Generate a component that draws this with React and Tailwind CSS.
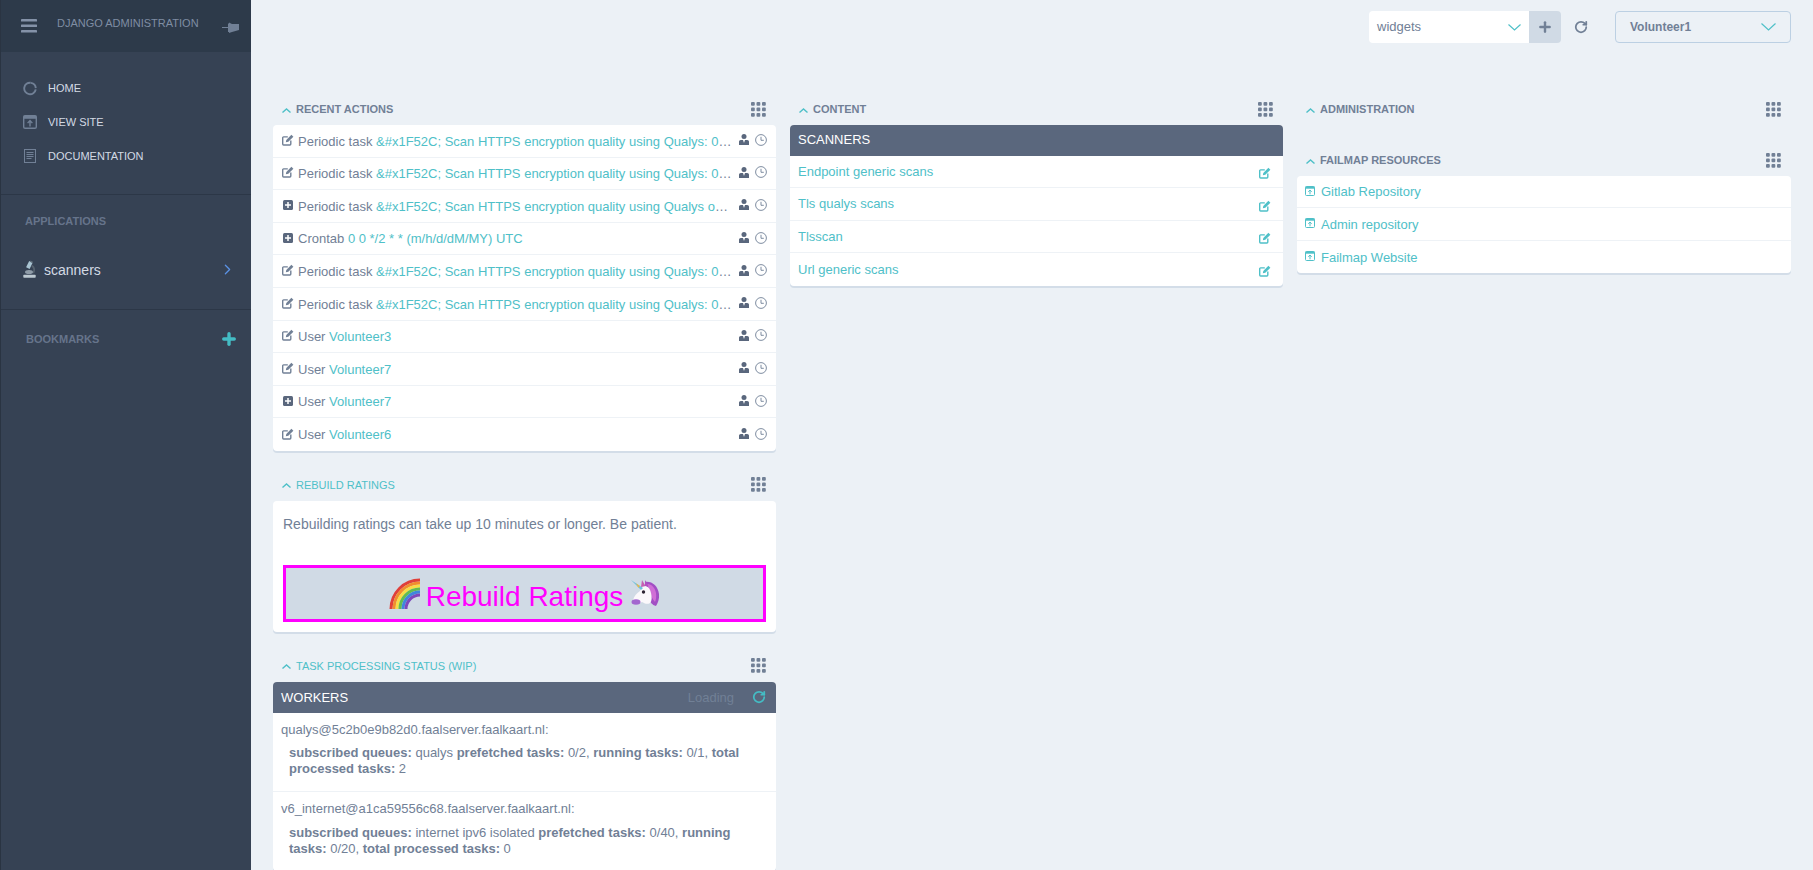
import React from "react";
import { ChevronRight, Plus, RotateCw } from "lucide-react";

const font = "font-['Liberation_Sans',Arial,sans-serif]";

const Grid = () => (
  <svg width="15" height="15" viewBox="0 0 15 15" className="fill-[#718096]">
    {[0, 5.5, 11].flatMap((y) => [0, 5.5, 11].map((x) => <rect key={x + "-" + y} x={x} y={y} width="3.8" height="3.8" rx="1" />))}
  </svg>
);

const Chev = ({ w, h, sw = 1.2, up, c = "#4fc0c8" }) => (
  <svg width={w} height={h} viewBox={`0 0 ${w} ${h}`} fill="none" stroke={c} strokeWidth={sw} className="shrink-0">
    <path d={up ? `M0.5 ${h - 0.5}L${w / 2} 1L${w - 0.5} ${h - 0.5}` : `M0.5 0.5L${w / 2} ${h - 1}L${w - 0.5} 0.5`} />
  </svg>
);

const Edit = ({ c = "#718096", s = 12 }) => (
  <svg width={s} height={s} viewBox="0 0 12 12" fill="none" className="shrink-0">
    <path d="M8.8 6.5v3.6a.9.9 0 0 1-.9.9H1.6a.9.9 0 0 1-.9-.9V3.8a.9.9 0 0 1 .9-.9h4.2" stroke={c} strokeWidth="1.4" />
    <path d="M3.8 8.3l.5-2.4L9.4.7l2 2-5.1 5.1z" fill={c} />
  </svg>
);

const AddBox = () => (
  <svg width="10" height="10" viewBox="0 0 10 10" className="shrink-0">
    <rect width="10" height="10" rx="1.5" fill="#5a677d" />
    <path d="M5 2v6M2 5h6" stroke="#fff" strokeWidth="1.5" />
  </svg>
);

const Person = () => (
  <svg width="10" height="11" viewBox="0 0 10 11" fill="#5a677d" className="shrink-0">
    <circle cx="5" cy="2.6" r="2.5" />
    <path d="M0 11V7.8C0 6.7.8 6 1.8 6H4l1 3 1-3h2.2C9.2 6 10 6.7 10 7.8V11z" />
  </svg>
);

const Clock = () => (
  <svg width="12" height="12" viewBox="0 0 12 12" fill="none" stroke="#718096" className="shrink-0">
    <circle cx="6" cy="6" r="5.4" strokeWidth="0.9" />
    <path d="M6 2.8V6.3H8.8" strokeWidth="0.9" />
  </svg>
);

const Launch = ({ c = "#4fc0c8", s = 10 }) => (
  <svg width={s} height={s} viewBox="0 0 10 10" fill="none" className="shrink-0">
    <rect x="0.5" y="0.5" width="9" height="9" rx="1" stroke={c} />
    <rect x="0.5" y="0.5" width="9" height="2.2" fill={c} />
    <path d="M5 8.3V4.3M3.3 5.8 5 4l1.7 1.8" stroke={c} />
  </svg>
);

const Title = ({ children, accent }) => (
  <div className="h-8 flex items-center justify-between pr-[10px] pl-[9px]">
    <div className="flex items-center gap-[5px]">
      <span className="mt-[2px] flex"><Chev w={9} h={5} sw={1.4} up /></span>
      <span className={`text-[11px] ${accent ? "text-[#4fc0c8]" : "text-[#718096] font-bold"}`}>{children}</span>
    </div>
    <Grid />
  </div>
);

const Card = ({ children }) => (
  <div className="bg-white rounded-[4px] shadow-[0_2px_0_#d3dde8] overflow-hidden">{children}</div>
);

const Action = ({ icon, type, link, last }) => (
  <div className={`h-[32.6px] flex items-center pl-[9px] pr-[9px] gap-[4px] text-[13px] ${last ? "" : "border-b border-[#eef2f6]"}`}>
    <span className="w-[12px] flex justify-center -mt-[2px]">{icon === "edit" ? <Edit /> : <AddBox />}</span>
    <div className="flex-1 min-w-0 truncate text-[#718096] pt-[1px]">
      {type} <span className="text-[#4fc0c8]">{link}</span>
    </div>
    <span className="flex items-center gap-[6px] -mt-[2px]"><Person /><Clock /></span>
  </div>
);

const LinkRow = ({ children, last, icon }) => (
  <div className={`h-[32.4px] flex items-center justify-between px-2 text-[13px] text-[#4fc0c8] ${last ? "" : "border-b border-[#eef2f6]"}`}>
    {children}
    {icon}
  </div>
);

const Rainbow = () => (
  <svg width="31" height="31" viewBox="0 0 31 31" fill="none">
    {[["#e0403a", 29], ["#f28d2e", 26], ["#f8dc45", 23], ["#63bd4f", 20], ["#3f86dc", 17], ["#7d48bb", 14]].map(([c, r]) => (
      <path key={c} d={`M${31 - r} 31A${r} ${r} 0 0 1 31 ${31 - r}`} stroke={c} strokeWidth="3" />
    ))}
  </svg>
);

const Unicorn = () => (
  <svg width="29" height="28" viewBox="9 8 29 28">
    <path d="M23 11c7-1 13 4 14 12 .5 5-1 9-3 12-4-1-6-4-7-8-1-5-3-10-4-16z" fill="#a24fc4" />
    <path d="M25 13c5 0 8 4 9 9 .5 4 0 7-1 9-3-3-4-7-5-11z" fill="#d06fd6" />
    <path d="M20 16c5-2 8 1 9 6 1 4 1 8-1 10-3 2-6 0-8-1l-5 2c-3 1-5-2-4-4 1-4 4-7 7-9z" fill="#fbf8fb" />
    <path d="M9 9l12 8-2 2z" fill="#6ec1dc" />
    <path d="M14 12.3l4 2.7-1.7 1.7z" fill="#e9b84a" />
    <path d="M19 16l1-7 3.500 6z" fill="#c65fb4" />
    <path d="M23 15l0-6 3.500 6z" fill="#b34fc0" />
    <circle cx="21.500" cy="21" r="1.700" fill="#2d2433" />
    <ellipse cx="14" cy="31" rx="4.500" ry="2.800" fill="#a366cf" />
  </svg>
);

const Microscope = () => (
  <svg width="13" height="18" viewBox="0 0 13 18" className="shrink-0">
    <path d="M6.200 1l3.400 1.800-3 6.200-3.500-1.800z" fill="#a9c4d2" />
    <path d="M7.500 0.500l2.500 1.200-.7 1.300-2.500-1.200z" fill="#5d6b78" />
    <path d="M9.300 5c3 1.600 3.700 5.800 1.600 8.600L9.500 12.500c1.400-2 1-4.600-1.100-5.900z" fill="#56626f" />
    <ellipse cx="6" cy="12" rx="4" ry="2" fill="#8f9ca8" />
    <rect x="0.300" y="14.800" width="12.400" height="3" rx="0.700" fill="#bcc8d0" />
  </svg>
);

const SideRow = ({ icon, children }) => (
  <div className="h-[34px] flex items-center pl-[22px] gap-[11px] text-[11px] text-[#d3dae4]">
    <span className="w-[14px] flex justify-center">{icon}</span>
    {children}
  </div>
);

const Sidebar = () => (
  <aside className="w-[251px] shrink-0 bg-[#364254] border-l border-[#2a3442]">
    <div className="h-[52px] bg-[#2d3a4a] flex pl-[20px] relative">
      <svg width="16" height="14" viewBox="0 0 16 14" fill="#8492a8" className="mt-[19px]">
        <rect width="16" height="2.600" y="0" rx="0.400" />
        <rect width="16" height="2.600" y="5.500" rx="0.400" />
        <rect width="16" height="2.600" y="11" rx="0.400" />
      </svg>
      <span className="ml-[20px] mt-[16px] text-[11px] text-[#7f8da3] leading-[14px]">DJANGO ADMINISTRATION</span>
      <svg width="17" height="13" viewBox="0 0 17 13" className="absolute left-[221px] top-[21px]" fill="#718096">
        <path d="M0 6h6V2.500h1V1.500L10 3h7v6l-7 2-3 1v-1H6V7H0z" />
      </svg>
    </div>
    <div className="pt-[19px] pb-[21px] border-b border-[#2c3747]">
      <SideRow icon={<svg width="15" height="15" viewBox="0 0 15 15" fill="none" stroke="#718096" strokeWidth="2"><circle cx="7.500" cy="7.500" r="6.200" strokeDasharray="8 1.300 28.300 1.300" transform="rotate(-80 7.500 7.500)" /></svg>}>HOME</SideRow>
      <SideRow icon={<Launch c="#718096" s={14} />}>VIEW SITE</SideRow>
      <SideRow icon={<svg width="12" height="14" viewBox="0 0 12 14" fill="none" stroke="#718096"><rect x="0.500" y="0.500" width="11" height="13" /><path d="M2.500 3.500h7M2.500 5.500h7M2.500 7.500h7M2.500 9.500h5" /></svg>}>DOCUMENTATION</SideRow>
    </div>
    <div className="pl-[24px] pt-[20px] text-[11px] font-bold text-[#66748b] leading-[13px]">APPLICATIONS</div>
    <div className="mt-[30px] pb-[29px] border-b border-[#2c3747] flex items-center pl-[22px] pr-[15px]">
      <Microscope />
      <span className="ml-[8px] pt-[2px] text-[14px] leading-[20px] text-[#d3dae4] flex-1">scanners</span>
      <ChevronRight size={17} strokeWidth={1.800} className="text-[#5b92e5]" />
    </div>
    <div className="pl-[25px] pr-[13px] pt-[20px] flex items-center justify-between">
      <span className="text-[11px] font-bold text-[#66748b]">BOOKMARKS</span>
      <Plus size={18} strokeWidth={4.500} className="text-[#44bcc4]" />
    </div>
  </aside>
);

const TopBar = () => (
  <div className="h-[93px] pt-[11px] pr-[22px] flex justify-end items-start">
    <div className="flex w-[192px] h-[32px]">
      <div className="flex-1 bg-white rounded-l-[4px] flex items-center justify-between pl-2 pr-[8px] text-[13px] text-[#718096]">
        widgets
        <Chev w={13} h={7} />
      </div>
      <div className="w-[32px] bg-[#d0dae5] rounded-r-[4px] flex items-center justify-center">
        <Plus size={16} strokeWidth={3.600} className="text-[#718096]" />
      </div>
    </div>
    <div className="w-[54px] h-[32px] flex items-center justify-center pr-[14px]">
      <RotateCw size={14} strokeWidth={3} className="text-[#718096]" />
    </div>
    <div className="w-[176px] h-[32px] rounded-[4px] border border-[#bcd0e3] flex items-center justify-between pl-[14px] pr-[14px] text-[12px] font-bold text-[#718096]">
      Volunteer1
      <Chev w={15} h={8} />
    </div>
  </div>
);

const scan = "&#x1F52C; Scan HTTPS encryption quality using Qualys: 0 0 */2 * * (m/h/d/dM/MY) UTC and more text here";
const actions = [
  ["edit", "Periodic task", scan],
  ["edit", "Periodic task", scan],
  ["add", "Periodic task", "&#x1F52C; Scan HTTPS encryption quality using Qualys once a day more text"],
  ["add", "Crontab", "0 0 */2 * * (m/h/d/dM/MY) UTC"],
  ["edit", "Periodic task", scan],
  ["edit", "Periodic task", scan],
  ["edit", "User", "Volunteer3"],
  ["edit", "User", "Volunteer7"],
  ["add", "User", "Volunteer7"],
  ["edit", "User", "Volunteer6"],
];

export default function App() {
  return (
    <div className={`${font} w-[1813px] h-[870px] overflow-hidden flex bg-[#ecf1f6]`}>
      <Sidebar />
      <main className="flex-1 min-w-0">
        <TopBar />
        <div className="grid grid-cols-[503px_493px_494px] gap-x-[14px] pl-[22px]">
          <div className="flex flex-col gap-[18px]">
            <section>
              <Title>RECENT ACTIONS</Title>
              <Card>
                {actions.map((a, i) => (
                  <Action key={i} icon={a[0]} type={a[1]} link={a[2]} last={i === actions.length - 1} />
                ))}
              </Card>
            </section>
            <section>
              <Title accent>REBUILD RATINGS</Title>
              <Card>
                <div className="h-[131px] px-[10px] pt-[14px]">
                  <p className="text-[14px] leading-[18px] text-[#718096]">Rebuilding ratings can take up 10 minutes or longer. Be patient.</p>
                  <div className="mt-[32px] h-[57px] border-[3px] border-[#ff00ff] bg-[#d0dae5] flex items-center justify-center text-[#ff00ff] text-[28px]">
                    <Rainbow />
                    <span className="ml-[6px] mr-[8px] pt-[7px]">Rebuild Ratings</span>
                    <Unicorn />
                  </div>
                </div>
              </Card>
            </section>
            <section>
              <Title accent>TASK PROCESSING STATUS (WIP)</Title>
              <Card>
                <div className="h-[31px] bg-[#5a677d] flex items-center justify-between pl-2 pr-[10px]">
                  <span className="text-[13px] text-white">WORKERS</span>
                  <div className="flex items-center gap-[18px]">
                    <span className="text-[13px] text-[#718096]">Loading</span>
                    <RotateCw size={14} strokeWidth={3} className="text-[#44bcc4]" />
                  </div>
                </div>
                <div className="px-2 pt-[9px] pb-[14px] border-b border-[#eef2f6] text-[13px] text-[#718096]">
                  <div className="leading-[16px]">qualys@5c2b0e9b82d0.faalserver.faalkaart.nl:</div>
                  <div className="mt-[7px] pl-2 leading-[16px]">
                    <b>subscribed queues:</b> qualys <b>prefetched tasks:</b> 0/2, <b>running tasks:</b> 0/1, <b>total processed tasks:</b> 2
                  </div>
                </div>
                <div className="px-2 pt-[9px] pb-[14px] text-[13px] text-[#718096]">
                  <div className="leading-[16px]">v6_internet@a1ca59556c68.faalserver.faalkaart.nl:</div>
                  <div className="mt-[8px] pl-2 leading-[16px]">
                    <b>subscribed queues:</b> internet ipv6 isolated <b>prefetched tasks:</b> 0/40, <b>running tasks:</b> 0/20, <b>total processed tasks:</b> 0
                  </div>
                </div>
              </Card>
            </section>
          </div>
          <div>
            <section>
              <Title>CONTENT</Title>
              <Card>
                <div className="h-[31px] bg-[#5a677d] flex items-center pl-2 pb-[2px] text-[13px] text-white">SCANNERS</div>
                {["Endpoint generic scans", "Tls qualys scans", "Tlsscan", "Url generic scans"].map((t, i) => (
                  <LinkRow key={t} last={i === 3} icon={<span className="pr-[4px] pt-[3px]"><Edit c="#4fc0c8" s={12} /></span>}>{t}</LinkRow>
                ))}
              </Card>
            </section>
          </div>
          <div className="flex flex-col gap-[19px]">
            <section><Title>ADMINISTRATION</Title></section>
            <section>
              <Title>FAILMAP RESOURCES</Title>
              <Card>
                {["Gitlab Repository", "Admin repository", "Failmap Website"].map((t, i) => (
                  <LinkRow key={t} last={i === 2}>
                    <span className="flex items-center gap-[6px] pt-[1px]"><span className="-mt-[3px]"><Launch /></span>{t}</span>
                  </LinkRow>
                ))}
              </Card>
            </section>
          </div>
        </div>
      </main>
    </div>
  );
}
